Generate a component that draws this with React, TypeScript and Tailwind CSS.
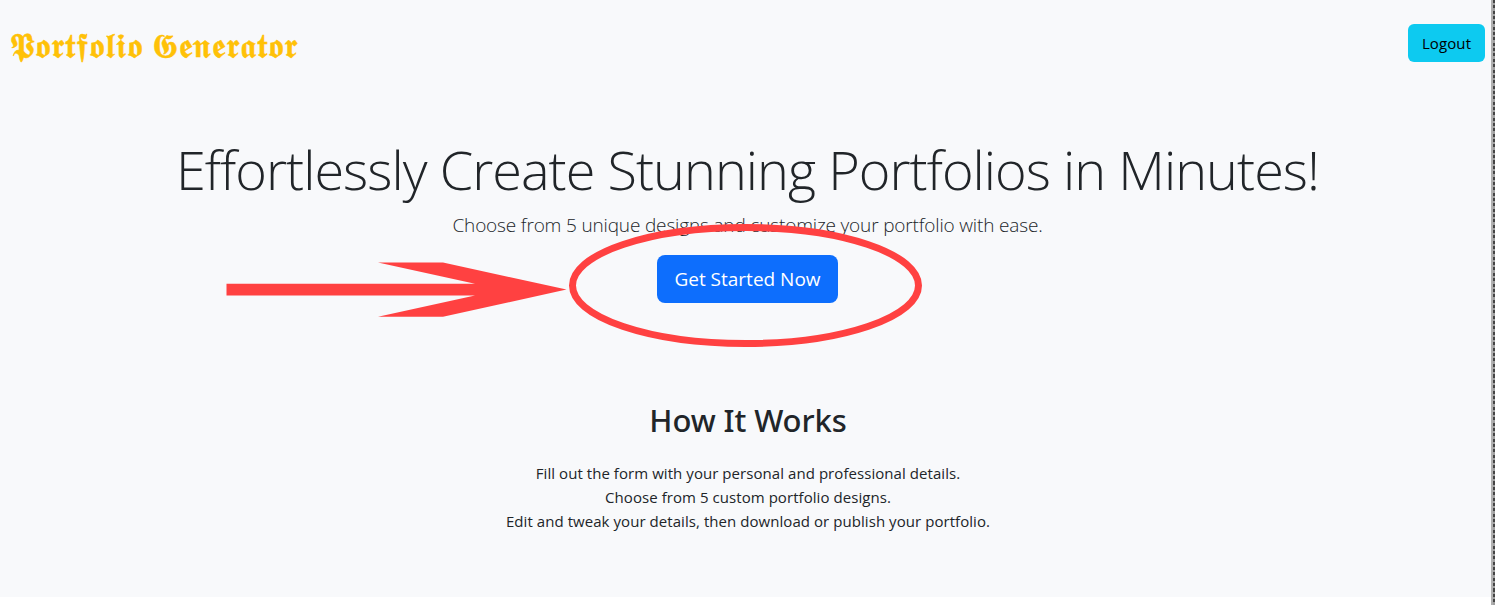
const steps = [
  "Fill out the form with your personal and professional details.",
  "Choose from 5 custom portfolio designs.",
  "Edit and tweak your details, then download or publish your portfolio.",
];

function Annotation() {
  return (
    <svg
      className="pointer-events-none absolute top-0 left-0"
      width="940"
      height="360"
      viewBox="0 0 940 360"
      fill="none"
    >
      <path
        d="M226.5 283.8H475L378 262.5H443L566.5 289.5L443 316.7H378L475 295.6H226.5Z"
        fill="#ff4141"
      />
      <ellipse cx="745.5" cy="285.5" rx="173" ry="58" stroke="#ff4141" strokeWidth="7" />
    </svg>
  );
}

export default function App() {
  return (
    <div className="relative flex h-[605px] w-full overflow-hidden bg-white font-['Open_Sans',sans-serif] text-[#212529]">
      <div className="flex h-[597px] min-w-0 flex-1 flex-col bg-[#f8f9fb]">
        <header className="flex items-start justify-between pt-6 pr-[6px] pl-[10px]">
          <h1 className="mt-[-2px] text-[34px] leading-[48px] tracking-[0.95px] [-webkit-text-stroke:0.5px_#ffc107] [word-spacing:-2px] whitespace-nowrap text-[#ffc107] font-['DejaVu_Sans',serif]">
            𝕻𝖔𝖗𝖙𝖋𝖔𝖑𝖎𝖔 𝕲𝖊𝖓𝖊𝖗𝖆𝖙𝖔𝖗
          </h1>
          <button className="h-[38px] w-[77px] rounded-md bg-[#0dcaf0] pt-px text-[15px] tracking-[0.1px] text-black">
            Logout
          </button>
        </header>

        <section className="flex flex-col items-center pt-[66px] pl-1">
          <h2 className="text-[54px] leading-[67px] font-light tracking-[-0.96px] whitespace-nowrap">
            Effortlessly Create Stunning Portfolios in Minutes!
          </h2>
          <p className="mt-[7px] text-[19px] leading-[30px] font-light tracking-[-0.16px]">
            Choose from 5 unique designs and customize your portfolio with ease.
          </p>
          <button className="mt-[15px] h-12 w-[181px] rounded-lg bg-[#0d6efd] text-[19px] text-white">
            Get Started Now
          </button>
        </section>

        <section className="flex flex-col items-center pt-[98px] pl-[5px]">
          <h3 className="text-[31px] leading-[38px] font-medium tracking-[-0.1px] font-['Noto_Sans',sans-serif]">
            How It Works
          </h3>
          <ul className="mt-[22px] text-center text-[15px] leading-6 tracking-[0.06px]">
            {steps.map((step) => (
              <li key={step}>{step}</li>
            ))}
          </ul>
        </section>
      </div>

      <div className="flex w-1 shrink-0">
        <div className="w-[2px] bg-[#b0b0b0]" />
        <div className="w-[2px] bg-[repeating-linear-gradient(to_bottom,#444_0px,#444_3px,#a0a0a0_3px,#a0a0a0_5.35px)]" />
      </div>

      <Annotation />
    </div>
  );
}
